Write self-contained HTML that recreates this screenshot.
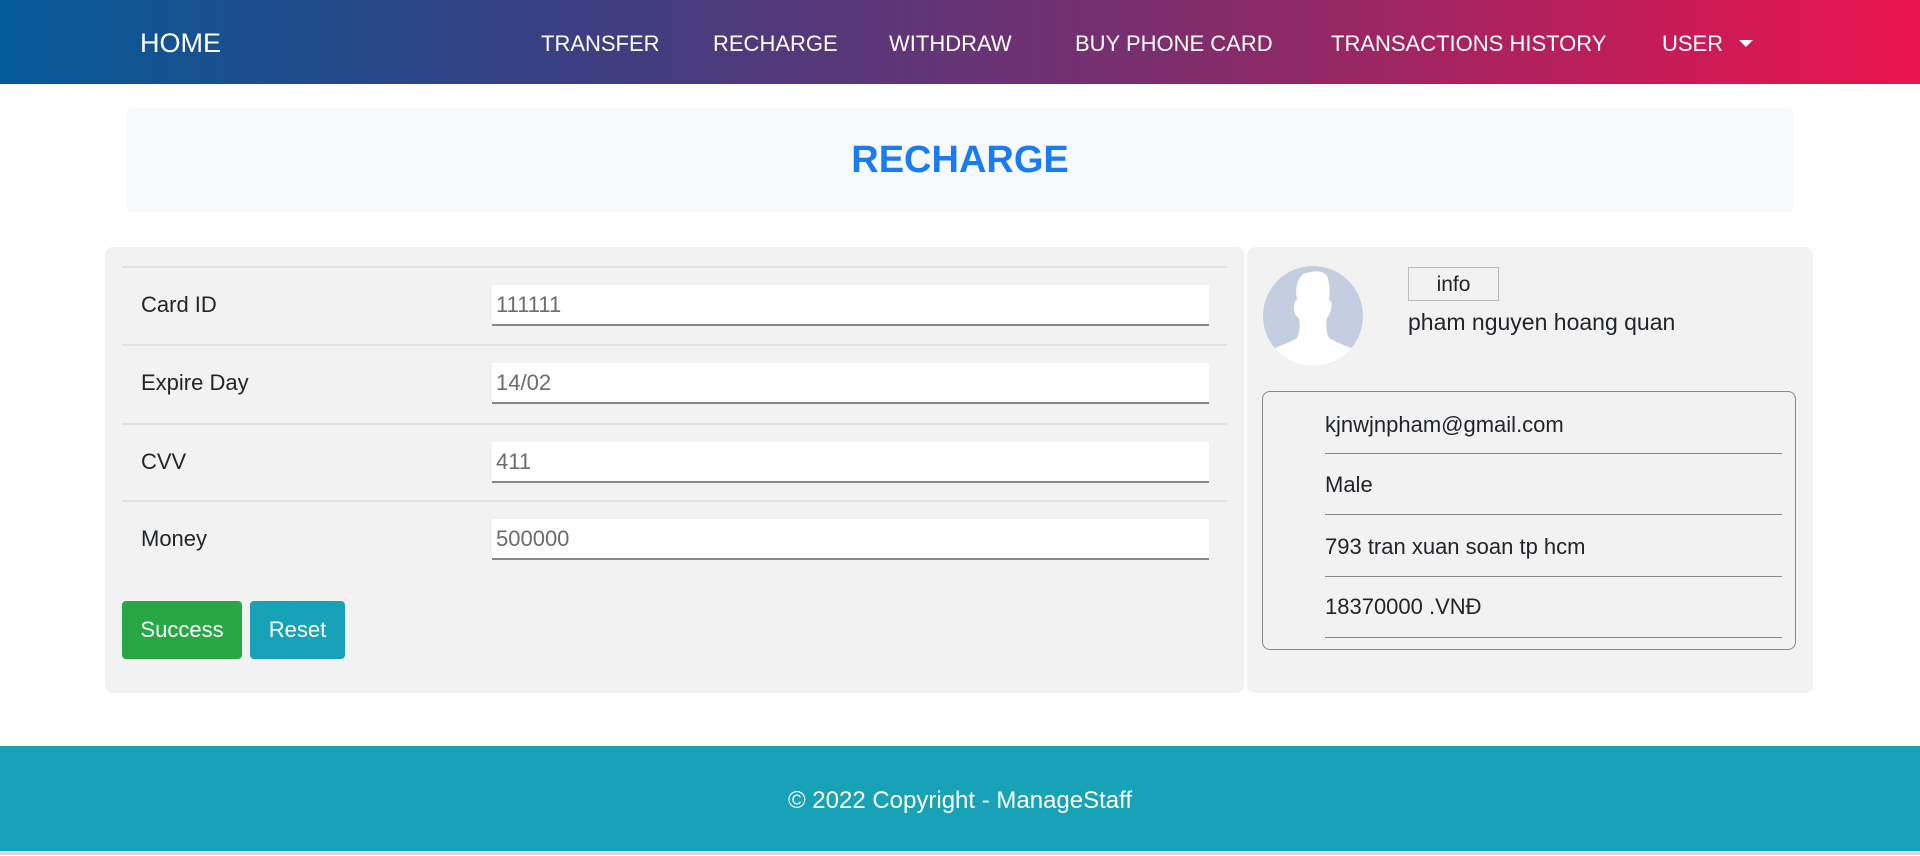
<!DOCTYPE html>
<html><head><meta charset="utf-8">
<style>
*{box-sizing:border-box;margin:0;padding:0}
body{width:1920px;height:855px;overflow:hidden;background:#fff;font-family:"Liberation Sans",sans-serif;color:#212529;position:relative}
.nav{position:absolute;left:0;top:0;width:1920px;height:84px;background:linear-gradient(90deg,#045a97 0%,#3b3f82 30%,#7b2e6e 60%,#c11d58 85%,#ec144d 100%)}
.nav span{position:absolute;top:0;line-height:88px;color:#fff;font-size:22px;white-space:nowrap}
.nav .home{font-size:27px;left:140px;line-height:87px}
.caret{display:inline-block;width:0;height:0;border-left:7px solid transparent;border-right:7px solid transparent;border-top:7px solid #fff;vertical-align:middle;margin-left:16px;margin-top:-4px}
.title{position:absolute;left:127px;top:108px;width:1666px;height:104px;background:#f8f9fa;border-radius:6px;text-align:center;line-height:104px;color:#1a7cf5;font-weight:bold;font-size:38px}
.panel{position:absolute;top:247px;height:446px;background:#f2f2f2;border-radius:8px}
.hl{position:absolute;left:122px;width:1105px;height:2px;background:#dee2e6}
.lbl{position:absolute;left:141px;font-size:22px;line-height:30px}
.inp{position:absolute;left:492px;width:717px;height:41px;background:#fff;border-bottom:2px solid #888;color:#6c6c6c;font-size:22px;line-height:40px;padding-left:4px}
.btn{position:absolute;top:601px;height:58px;border-radius:4px;color:#fff;font-size:22px;line-height:58px;text-align:center}
.rt{position:absolute;left:1325px;font-size:22px;line-height:30px}
.rl{position:absolute;left:1325px;width:457px;height:1px;background:#888}
</style></head><body>
<div class="nav">
<span class="home">HOME</span>
<span style="left:541px">TRANSFER</span>
<span style="left:713px">RECHARGE</span>
<span style="left:889px">WITHDRAW</span>
<span style="left:1075px">BUY PHONE CARD</span>
<span style="left:1331px">TRANSACTIONS HISTORY</span>
<span style="left:1662px">USER<i class="caret"></i></span>
</div>
<div class="title">RECHARGE</div>

<div class="panel" style="left:105px;width:1139px"></div>
<div class="hl" style="top:266px"></div>
<div class="hl" style="top:344px"></div>
<div class="hl" style="top:423px"></div>
<div class="hl" style="top:500px"></div>
<div class="lbl" style="top:290px">Card ID</div>
<div class="lbl" style="top:368px">Expire Day</div>
<div class="lbl" style="top:447px">CVV</div>
<div class="lbl" style="top:524px">Money</div>
<div class="inp" style="top:285px">111111</div>
<div class="inp" style="top:363px">14/02</div>
<div class="inp" style="top:442px">411</div>
<div class="inp" style="top:519px">500000</div>
<div class="btn" style="left:122px;width:120px;background:#28a745">Success</div>
<div class="btn" style="left:250px;width:95px;background:#17a2b8">Reset</div>

<div class="panel" style="left:1247px;width:566px"></div>
<svg style="position:absolute;left:1263px;top:266px" width="100" height="100" viewBox="0 0 100 100">
<defs><clipPath id="c"><circle cx="50" cy="50" r="50"/></clipPath></defs>
<circle cx="50" cy="50" r="50" fill="#c5cee0"/>
<g clip-path="url(#c)" fill="#fff">
<path d="M40 8 Q58 2 64 10 Q68 20 66 34 Q70 36 68 44 Q66 50 64 52 Q62 64 66 72 Q80 80 100 86 L100 100 L0 100 L0 86 Q20 80 34 72 Q38 64 36 52 Q32 50 31 44 Q30 36 34 34 Q31 16 40 8Z"/>
</g></svg>
<div style="position:absolute;left:1408px;top:267px;width:91px;height:34px;border:1px solid #bbb;background:#f2f2f2;text-align:center;font-size:21px;line-height:34px">info</div>
<div style="position:absolute;left:1408px;top:307px;font-size:23px;line-height:30px">pham nguyen hoang quan</div>
<div style="position:absolute;left:1262px;top:391px;width:534px;height:259px;border:1px solid #888;border-radius:8px"></div>
<div class="rt" style="top:410px">kjnwjnpham@gmail.com</div>
<div class="rl" style="top:453px"></div>
<div class="rt" style="top:470px">Male</div>
<div class="rl" style="top:514px"></div>
<div class="rt" style="top:532px">793 tran xuan soan tp hcm</div>
<div class="rl" style="top:576px"></div>
<div class="rt" style="top:592px">18370000 .VNĐ</div>
<div class="rl" style="top:637px"></div>

<div style="position:absolute;left:0;top:746px;width:1920px;height:105px;background:#17a2b8;color:#fff;font-size:24px;text-align:center;line-height:110px">© 2022 Copyright - ManageStaff</div>
<div style="position:absolute;left:0;top:851px;width:1920px;height:4px;background:#d8d8d8"></div>
</body></html>
